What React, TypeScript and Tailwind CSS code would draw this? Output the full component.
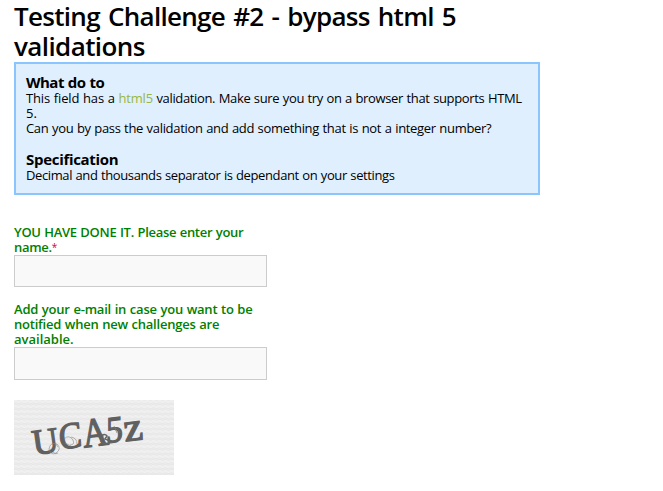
import React from "react";

type LineProps = { children: React.ReactNode; className?: string };

function Line({ children, className = "" }: LineProps) {
  return <span className={"block whitespace-nowrap " + className}>{children}</span>;
}

function Captcha() {
  return (
    <svg width="160" height="75" viewBox="0 0 160 75" className="mt-5 block" aria-label="Captcha">
      <defs>
        <pattern id="waves" width="6" height="5" patternUnits="userSpaceOnUse">
          <rect width="6" height="5" fill="#ebebeb" />
          <path d="M0 1.5 Q1.5 0 3 1.5 T6 1.5" fill="none" stroke="#f2f2f2" strokeWidth="1.2" />
          <path d="M0 4 Q1.5 5 3 4 T6 4" fill="none" stroke="#e6e6e6" strokeWidth="0.7" />
        </pattern>
      </defs>
      <rect width="160" height="75" fill="url(#waves)" />
      <g fill="#606060" stroke="#606060" strokeWidth="1.3" fontFamily="'Liberation Serif', serif">
        <text transform="translate(20 55) rotate(-8)" fontSize="36" textLength="26" lengthAdjust="spacingAndGlyphs">U</text>
        <text transform="translate(46 50) rotate(-10) skewX(-5)" fontSize="37" textLength="23" lengthAdjust="spacingAndGlyphs">C</text>
        <text transform="translate(70 47.5) rotate(-7)" fontSize="41" textLength="25" lengthAdjust="spacingAndGlyphs">A</text>
        <text transform="translate(92 43) rotate(-7) skewX(-7)" fontSize="37" textLength="17" lengthAdjust="spacingAndGlyphs">5</text>
        <text transform="translate(111 41.5) rotate(-7)" fontSize="40" textLength="19" lengthAdjust="spacingAndGlyphs">z</text>
      </g>
      <g fill="none" stroke="#868686" strokeWidth="0.6">
        <path d="M35 49 q1 -7 8 -5 q5 5 -1 9 q-5 3 -7 -4 M41 43 l3 4 M39 52 q3 3 5 1" />
        <path d="M50 39 q5 -5 9 1 q2 5 -3 5 M57 37 q6 1 6 7 M51 43 l6 3" />
      </g>
      <path d="M86 36 q5 -3 7 0 l-2 3 l5 2 l-1 3 l-7 -1 l-3 2 M89 35 l-2 7 M94 43 l6 -1" fill="none" stroke="#656565" strokeWidth="1.5" />
      <path d="M97 28 q7 -1 9 5 M100 26 l3 7" fill="none" stroke="#777777" strokeWidth="0.7" />
    </svg>
  );
}

export default function App() {
  return (
    <main className="h-[491px] w-[663px] overflow-hidden bg-white pl-[14px] pt-px font-['Open_Sans',sans-serif] text-[13px] leading-[15px] text-black [word-spacing:0.5px]">
      <h1 className="pb-px text-[26px] font-semibold leading-[30px] [word-spacing:2px]">
        <Line className="tracking-[-0.7px]">Testing Challenge #2 - bypass html 5</Line>
        <Line className="tracking-[-0.6px]">validations</Line>
      </h1>

      <section className="h-[133px] w-[526px] border-2 border-[#8bc5fe] bg-[#dfeffe] px-[10px] pt-[10px]">
        <h2 className="text-[15px] font-bold leading-[17px] tracking-[-0.5px]">What do to</h2>
        <p>
          <Line className="tracking-[-0.35px]">
            <span className="tracking-[-0.14px]">This field has a </span>
            <a className="tracking-[-0.2px] text-[#97b73f]">html5</a> validation. Make sure you try on a browser that supports HTML
          </Line>
          <Line>5.</Line>
          <Line className="tracking-[-0.32px]">Can you by pass the validation and add something that is not a integer number?</Line>
        </p>
        <h2 className="mt-[15px] text-[15px] font-bold leading-[17px] tracking-[-0.3px]">Specification</h2>
        <p>
          <Line className="tracking-[-0.39px]">Decimal and thousands separator is dependant on your settings</Line>
        </p>
      </section>

      <form className="mt-[30px] w-[253px]">
        <label className="block font-semibold text-[#008000]">
          <Line className="tracking-[-0.3px]">YOU HAVE DONE IT. Please enter your</Line>
          <Line className="tracking-[-0.3px]">
            name.<span className="relative -top-px text-[10px] font-normal leading-none text-[#d0003c]">*</span>
          </Line>
          <input type="text" className="block h-8 w-full border border-[#cccccc] bg-[#f9f9f9]" />
        </label>
        <label className="mt-[15px] block font-semibold text-[#008000]">
          <Line className="tracking-[-0.21px]">Add your e-mail in case you want to be</Line>
          <Line className="tracking-[-0.22px]">notified when new challenges are</Line>
          <Line>available.</Line>
          <input type="text" className="block h-[33px] w-full border border-[#cccccc] bg-[#f9f9f9]" />
        </label>
        <Captcha />
      </form>
    </main>
  );
}
